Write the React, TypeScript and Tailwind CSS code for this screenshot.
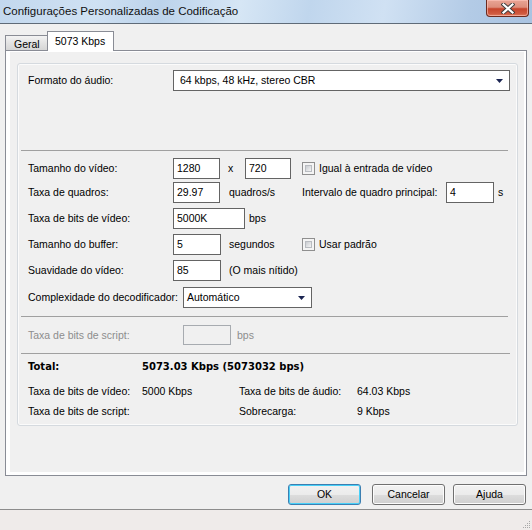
import React from "react";

function Arrow() {
  return (
    <svg width="7" height="4" viewBox="0 0 7 4" className="block">
      <path d="M0 0H7L3.5 4Z" fill="#1b2552" />
    </svg>
  );
}

function Checkbox() {
  return (
    <div className="w-[13px] h-[13px] border border-[#8f8f8f] bg-[#f4f4f4] p-[2px] shrink-0">
      <div className="w-full h-full border border-[#b9bcc1] bg-[linear-gradient(135deg,#c9ccd1,#f4f4f4)]" />
    </div>
  );
}

function Btn({ label, def, cls }: { label: string; def?: boolean; cls: string }) {
  return (
    <div
      className={
        "h-[21px] rounded-[3px] border flex items-center justify-center bg-[linear-gradient(#f2f2f2_0%,#ebebeb_50%,#dddddd_50%,#cfcfcf_100%)] " +
        (def
          ? "border-[#3c7fb1] shadow-[inset_0_0_0_1px_#48d0f8] "
          : "border-[#707070] shadow-[inset_0_0_0_1px_#fcfcfc] ") +
        cls
      }
    >
      {label}
    </div>
  );
}

export default function App() {
  return (
    <div className="w-[532px] h-[530px] flex flex-col overflow-hidden bg-[#f0f0f0] text-black text-[10.5px] leading-none font-['Liberation_Sans',Arial,sans-serif]">
      {/* Title bar */}
      <div className="h-[24px] shrink-0 flex justify-between border-b border-[#5f6b78] bg-[linear-gradient(100deg,#c3d8ee_0%,#cfe1f3_18%,#bcd3eb_30%,#d6e6f5_45%,#c0d6ed_58%,#d0e1f3_72%,#b3cbe6_88%,#a9c3e1_100%)]">
        <div className="pl-[3px] pt-[6px] text-[11.5px] text-[#101010]">Configurações Personalizadas de Codificação</div>
        <div className="mr-[3px] w-[43px] h-[17px] rounded-b-[4px] border border-t-0 border-[#6b2a1e] shadow-[inset_0_0_0_1px_rgba(255,200,190,0.6)] bg-[linear-gradient(#e9a595_0%,#dd8e7c_45%,#c7452c_55%,#cf5a40_85%,#e07a5c_100%)] flex items-center justify-center">
          <svg width="14" height="11" viewBox="0 0 14 11">
            <path d="M2.5 1.5L11.5 9.5M11.5 1.5L2.5 9.5" stroke="#3b3b3b" strokeWidth="4" strokeLinecap="square" />
            <path d="M2.5 1.5L11.5 9.5M11.5 1.5L2.5 9.5" stroke="#ffffff" strokeWidth="2.2" strokeLinecap="square" />
          </svg>
        </div>
      </div>

      {/* Main */}
      <div className="flex-1 flex flex-col">
        {/* Tabs */}
        <div className="relative z-10 flex items-end h-[20px] mt-[7px] pl-[5px]">
          <div className="w-[42px] h-[15px] mb-[1px] border-l border-t border-[#898c95] bg-[linear-gradient(#f3f3f3,#e3e3e3_50%,#d6d6d6)] pl-[8px] pt-[3px]">
            Geral
          </div>
          <div className="w-[67px] h-[20px] border-l border-t border-r border-[#898c95] bg-white pl-[7px] pt-[4px]">
            5073 Kbps
          </div>
        </div>

        {/* Pane */}
        <div className="-mt-[1px] ml-[5px] w-[522px] h-[426px] border border-[#898c95] bg-white pl-[4px] pr-[2px] pt-[1px] pb-[3px]">
          <div className="w-full h-full bg-[#f0f0f0] pl-[7px] pt-[11px]">
            {/* Inner panel */}
            <div className="w-[501px] h-[363px] border border-[#d5dadf] rounded-[3px] shadow-[inset_0_0_0_1px_#fbfbfb] pl-[10px] pt-[6px]">
              {/* Audio format */}
              <div className="flex items-center h-[21px]">
                <div className="w-[145px]">Formato do áudio:</div>
                <div className="w-[337px] h-[21px] border border-[#646464] bg-white flex items-center justify-between pl-[6px] pr-[6px]">
                  <span>64 kbps, 48 kHz, stereo CBR</span>
                  <Arrow />
                </div>
              </div>

              <div className="mt-[59px] -ml-[7px] w-[487px] border-t border-[#a0a0a0]" />

              {/* Row 1 */}
              <div className="flex items-center h-[21px] mt-[7px]">
                <div className="w-[145px]">Tamanho do vídeo:</div>
                <div className="w-[47px] h-[21px] border border-[#646464] bg-white flex items-center pl-[3px]">1280</div>
                <div className="w-[25px] pl-[8px]">x</div>
                <div className="w-[46px] h-[21px] border border-[#646464] bg-white flex items-center pl-[3px]">720</div>
                <div className="ml-[11px]"><Checkbox /></div>
                <div className="ml-[4px]">Igual à entrada de vídeo</div>
              </div>

              {/* Row 2 */}
              <div className="flex items-center h-[21px] mt-[3px]">
                <div className="w-[145px]">Taxa de quadros:</div>
                <div className="w-[47px] h-[21px] border border-[#646464] bg-white flex items-center pl-[3px]">29.97</div>
                <div className="w-[82px] pl-[9px]">quadros/s</div>
                <div className="w-[144px]">Intervalo de quadro principal:</div>
                <div className="w-[48px] h-[21px] border border-[#646464] bg-white flex items-center pl-[3px]">4</div>
                <div className="ml-[4px]">s</div>
              </div>

              {/* Row 3 */}
              <div className="flex items-center h-[21px] mt-[5px]">
                <div className="w-[145px]">Taxa de bits de vídeo:</div>
                <div className="w-[72px] h-[21px] border border-[#646464] bg-white flex items-center pl-[3px]">5000K</div>
                <div className="ml-[4px]">bps</div>
              </div>

              {/* Row 4 */}
              <div className="flex items-center h-[21px] mt-[5px]">
                <div className="w-[145px]">Tamanho do buffer:</div>
                <div className="w-[48px] h-[21px] border border-[#646464] bg-white flex items-center pl-[3px]">5</div>
                <div className="w-[81px] pl-[8px]">segundos</div>
                <Checkbox />
                <div className="ml-[4px]">Usar padrão</div>
              </div>

              {/* Row 5 */}
              <div className="flex items-center h-[21px] mt-[5px]">
                <div className="w-[145px]">Suavidade do vídeo:</div>
                <div className="w-[48px] h-[21px] border border-[#646464] bg-white flex items-center pl-[3px]">85</div>
                <div className="ml-[8px]">(O mais nítido)</div>
              </div>

              {/* Row 6 */}
              <div className="flex items-center h-[21px] mt-[6px]">
                <div className="w-[155px]">Complexidade do decodificador:</div>
                <div className="w-[129px] h-[21px] border border-[#646464] bg-white flex items-center justify-between pl-[3px] pr-[6px]">
                  <span>Automático</span>
                  <Arrow />
                </div>
              </div>

              <div className="mt-[8px] -ml-[7px] w-[487px] border-t border-[#a0a0a0]" />

              {/* Row 7 disabled */}
              <div className="flex items-center h-[20px] mt-[8px] text-[#8d8d8d]">
                <div className="w-[155px]">Taxa de bits de script:</div>
                <div className="w-[48px] h-[20px] border border-[#a7abb0] bg-[#f0f0f0]" />
                <div className="ml-[6px]">bps</div>
              </div>

              <div className="mt-[8px] -ml-[7px] w-[489px] border-t border-[#a0a0a0]" />

              {/* Total */}
              <div className="flex items-center h-[16px] mt-[5px] font-['DejaVu_Sans',Verdana,sans-serif] font-bold text-[10px]">
                <div className="w-[114px]">Total:</div>
                <div>5073.03 Kbps (5073032 bps)</div>
              </div>

              <div className="flex items-center h-[16px] mt-[8px]">
                <div className="w-[114px]">Taxa de bits de vídeo:</div>
                <div className="w-[97px]">5000 Kbps</div>
                <div className="w-[118px]">Taxa de bits de áudio:</div>
                <div>64.03 Kbps</div>
              </div>

              <div className="flex items-center h-[16px] mt-[4px]">
                <div className="w-[114px]">Taxa de bits de script:</div>
                <div className="w-[97px]" />
                <div className="w-[118px]">Sobrecarga:</div>
                <div>9 Kbps</div>
              </div>
            </div>
          </div>
        </div>

        {/* Buttons */}
        <div className="flex justify-end mt-[8px] pr-[6px]">
          <Btn label="OK" def cls="w-[73px] mr-[11px]" />
          <Btn label="Cancelar" cls="w-[73px] mr-[8px]" />
          <Btn label="Ajuda" cls="w-[73px]" />
        </div>
      </div>

      {/* Bottom strip */}
      <div className="h-[21px] shrink-0 border-t border-[#8c8c8c] bg-[#efebea] flex justify-end items-end pr-[1px] pb-[1px]">
        <svg width="10" height="10" viewBox="0 0 10 10">
          <g fill="#a8a8a8">
            <rect x="8" y="2" width="1" height="1" />
            <rect x="6" y="4" width="1" height="1" />
            <rect x="8" y="4" width="1" height="1" />
            <rect x="4" y="6" width="1" height="1" />
            <rect x="6" y="6" width="1" height="1" />
            <rect x="8" y="6" width="1" height="1" />
            <rect x="2" y="8" width="1" height="1" />
            <rect x="4" y="8" width="1" height="1" />
            <rect x="6" y="8" width="1" height="1" />
            <rect x="8" y="8" width="1" height="1" />
          </g>
        </svg>
      </div>
    </div>
  );
}
